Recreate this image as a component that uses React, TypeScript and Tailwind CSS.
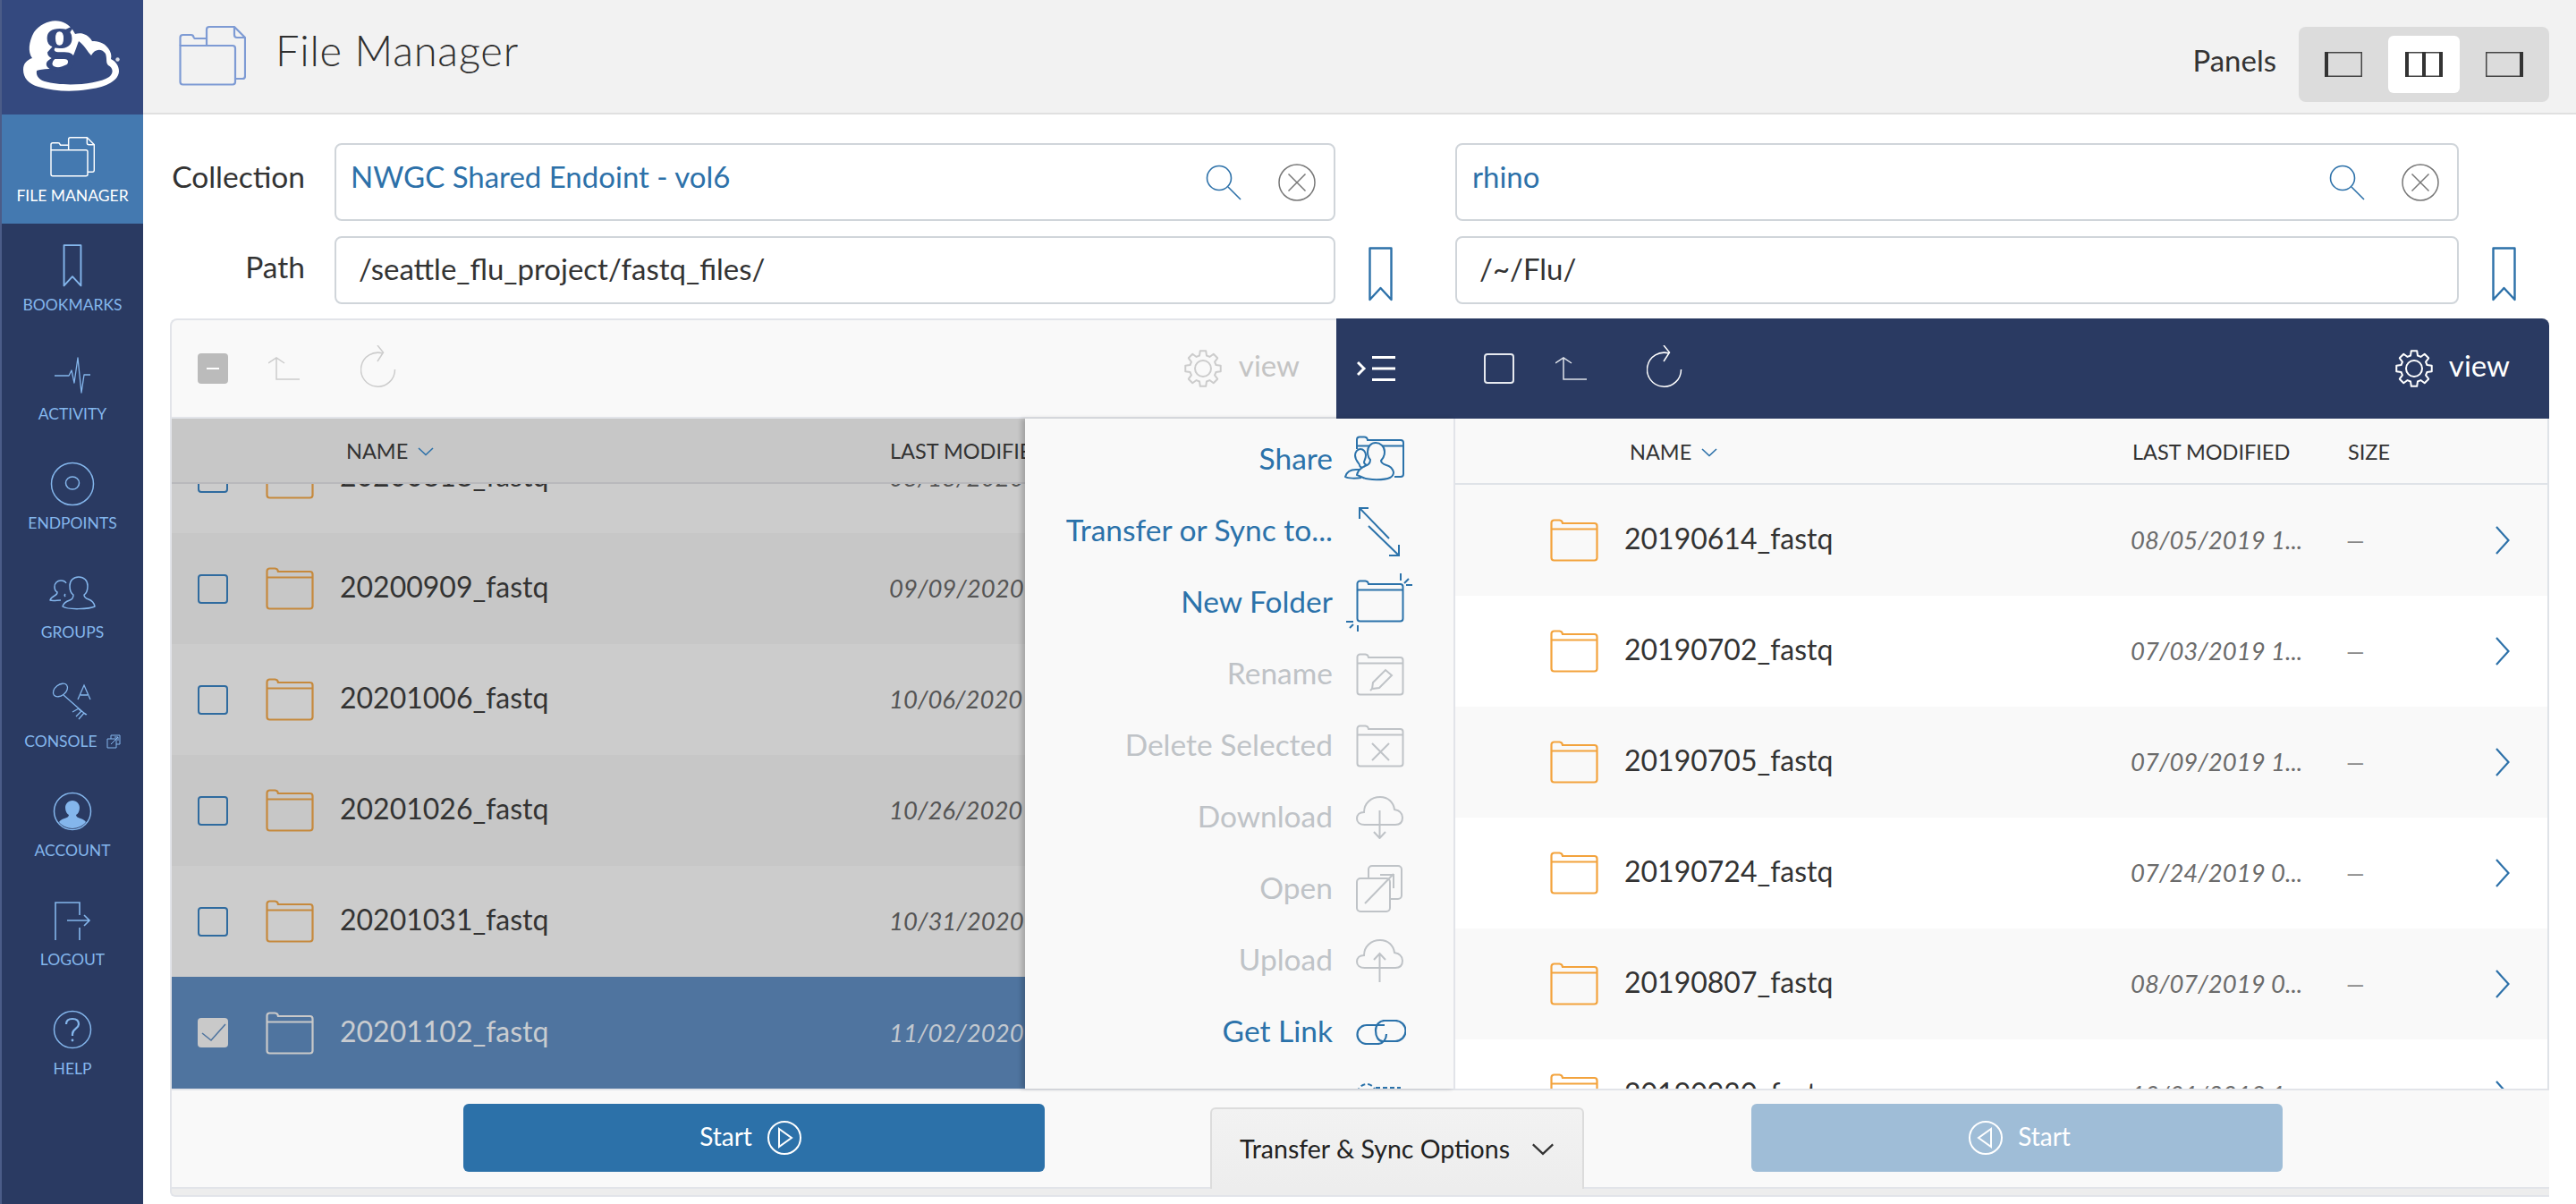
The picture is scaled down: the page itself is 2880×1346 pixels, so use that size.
import React from "react";

type P = { className?: string };

function gearPath() {
  const cx = 21, cy = 21, n = 8, ro = 20, ri = 15;
  const pts: string[] = [];
  for (let i = 0; i < n; i++) {
    const a = (i * 2 * Math.PI) / n - Math.PI / 2;
    const d1 = 0.27, d2 = 0.16;
    const list: [number, number][] = [[a - d1, ri], [a - d2, ro], [a + d2, ro], [a + d1, ri]];
    list.forEach(([t, r]) => pts.push(`${(cx + r * Math.cos(t)).toFixed(2)},${(cy + r * Math.sin(t)).toFixed(2)}`));
  }
  return pts.join(" ");
}

const Gear = ({ className }: P) => (
  <svg viewBox="0 0 42 42" className={className} fill="none" stroke="currentColor" strokeWidth="2" strokeLinejoin="round">
    <polygon points={gearPath()} />
    <circle cx="21" cy="21" r="9" />
  </svg>
);

const Folder = ({ className }: P) => (
  <svg viewBox="0 0 54 48" className={className} fill="none" stroke="currentColor" strokeWidth="2.2">
    <path d="M1.5 43.5V4.5a3 3 0 0 1 3-3h6a4 4 0 0 1 3.5 3.5H49.5a3 3 0 0 1 3 3V43.5a3 3 0 0 1-3 3H4.5a3 3 0 0 1-3-3z" />
    <path d="M1.5 11.5H52.5" />
  </svg>
);

const FileMgr = ({ className }: P) => (
  <svg viewBox="0 0 75 68" className={className} fill="none" stroke="currentColor" strokeWidth="2.2" strokeLinejoin="round">
    <path d="M1.5 23V14a3 3 0 0 1 3-3h9a3 3 0 0 1 3 2.5l1 1.5H31" />
    <path d="M1.5 23H60a3 3 0 0 1 3 3V63.5a3 3 0 0 1-3 3H4.5a3 3 0 0 1-3-3z" />
    <path d="M31 23V5a3 3 0 0 1 3-3H62L74 14V57a3 3 0 0 1-3 3H63" />
    <path d="M62 2V11a3 3 0 0 0 3 3H74" />
  </svg>
);

const Bookmark = ({ className }: P) => (
  <svg viewBox="0 0 27 61" className={className} fill="none" stroke="currentColor" strokeWidth="2.4" strokeLinejoin="round">
    <path d="M1.5 1.5H25.5V59L13.5 46 1.5 59z" />
  </svg>
);

const Activity = ({ className }: P) => (
  <svg viewBox="0 0 40 41" className={className} fill="none" stroke="currentColor" strokeWidth="1.3" strokeLinejoin="round">
    <path d="M0 21H16L19 15 22 29 26 1 30 40 33 20H40" />
  </svg>
);

const Endpoints = ({ className }: P) => (
  <svg viewBox="0 0 50 50" className={className} fill="none" stroke="currentColor" strokeWidth="1.5">
    <circle cx="25" cy="25" r="23.5" />
    <ellipse cx="25" cy="24" rx="7.5" ry="7" />
  </svg>
);

const Groups = ({ className }: P) => (
  <svg viewBox="0 0 52 38" className={className} fill="none" stroke="currentColor" strokeWidth="1.5" strokeLinejoin="round">
    <path d="M27 21c-3-2-4-6-4-10 0-6 4-10 10-10s10 4 10 10c0 4-1 8-4 10 0 3 2 4 5 5 3 1 6 3 7 8-6 3-30 4-36 0 1-4 5-6 8-7 3-1 4-3 4-6z" />
    <path d="M13 27c-4 0-9 1-12 0 1-3 3-4 5-5 2-1 3-2 3-4-2-1-3-4-3-6 0-4 3-7 7-7 3 0 5 1 6 3M18 20c-1 1-1 2 0 3" />
  </svg>
);

const Console = ({ className }: P) => (
  <svg viewBox="0 0 46 45" className={className} fill="none" stroke="currentColor" strokeWidth="1.3">
    <ellipse cx="9.5" cy="8.5" rx="9" ry="6" transform="rotate(-38 9.5 8.5)" />
    <path d="M13 14 38 36M30 29l-7 4M33 32l-6 6M36 34l-6 7M39 36l-9-6" />
    <path d="M29 19 36 3 43 19M32 14H40" />
  </svg>
);

const MiniOpen = ({ className }: P) => (
  <svg viewBox="0 0 16 16" className={className} fill="none" stroke="currentColor" strokeWidth="1">
    <path d="M5 5V1H15V11H11" />
    <path d="M1 5H11V15H1z" />
    <path d="M5 11 13 3M9 3H13V7" />
  </svg>
);

const Account = ({ className }: P) => (
  <svg viewBox="0 0 44 44" className={className}>
    <circle cx="22" cy="22" r="20.5" fill="none" stroke="currentColor" strokeWidth="1.5" />
    <path fill="currentColor" d="M22 10c5 0 8 4 8 8 0 4-2 7-4 8 0 2 2 3 5 4 3 1 5 2 6 4-3 4-9 7-15 7s-12-3-15-7c1-2 3-3 6-4 3-1 5-2 5-4-2-1-4-4-4-8 0-4 3-8 8-8z" />
  </svg>
);

const Logout = ({ className }: P) => (
  <svg viewBox="0 0 41 43" className={className} fill="none" stroke="currentColor" strokeWidth="1.6">
    <path d="M1 43V1H28V15M28 29V43M14 21H39M33 15l6 6-6 6" />
  </svg>
);

const Help = ({ className }: P) => (
  <svg viewBox="0 0 44 44" className={className} fill="none" stroke="currentColor" strokeWidth="1.5">
    <circle cx="22" cy="22" r="20.5" />
    <path strokeWidth="2.2" d="M15 16c0-4 3-6 7-6s7 2 7 6c0 5-7 5-7 11v2" />
    <circle cx="22" cy="34" r="1.4" fill="currentColor" stroke="none" />
  </svg>
);

const PanelIcon = ({ mode }: { mode: "l" | "b" | "r" }) => (
  <svg viewBox="0 0 42 28" className="w-[42px] h-[28px]">
    <rect x="0.75" y="0.75" width="40.5" height="26.5" fill="none" stroke="#444" strokeWidth="1.5" />
    {mode !== "r" && <rect x="0" y="0" width="4" height="28" fill="#333" />}
    {mode !== "l" && <rect x="38" y="0" width="4" height="28" fill="#333" />}
    {mode === "b" && <rect x="19" y="0" width="4" height="28" fill="#333" />}
  </svg>
);

const Search = () => (
  <svg viewBox="0 0 40 40" className="w-[40px] h-[40px] text-[#2d71a9]" fill="none" stroke="currentColor" strokeWidth="1.6">
    <circle cx="15" cy="15" r="13.5" />
    <path d="M25 25 39 39" />
  </svg>
);

const Clear = () => (
  <svg viewBox="0 0 42 42" className="w-[42px] h-[42px] text-[#777777]" fill="none" stroke="currentColor" strokeWidth="1.5">
    <circle cx="21" cy="21" r="20" />
    <path d="M11.5 11.5 30.5 30.5M30.5 11.5 11.5 30.5" />
  </svg>
);

const UpArrow = ({ className }: P) => (
  <svg viewBox="0 0 36 26" className={className} fill="none" stroke="currentColor" strokeWidth="1.5">
    <path d="M0 7 9 1 18 7M9 1V25H35" />
  </svg>
);

const Refresh = ({ className }: P) => (
  <svg viewBox="0 0 40 47" className={className} fill="none" stroke="currentColor" strokeWidth="1.5">
    <path d="M25 9A19 19 0 1 0 38.5 27" />
    <path d="M19 0 25.5 8 19 18" />
  </svg>
);

const ChevDown = ({ className }: P) => (
  <svg viewBox="0 0 18 10" className={className} fill="none" stroke="currentColor" strokeWidth="1.6">
    <path d="M1 1 9 8.5 17 1" />
  </svg>
);

const ChevRight = () => (
  <svg viewBox="0 0 16 32" className="w-[16px] h-[32px] shrink-0 text-[#2d71a9]" fill="none" stroke="currentColor" strokeWidth="2.2">
    <path d="M1 1 14.5 16 1 31" />
  </svg>
);

const FolderBase = () => (
  <>
    <path d="M1.5 43.5V4.5a3 3 0 0 1 3-3h6a4 4 0 0 1 3.5 3.5H49.5a3 3 0 0 1 3 3V43.5a3 3 0 0 1-3 3H4.5a3 3 0 0 1-3-3z" />
    <path d="M1.5 11.5H52.5" />
  </>
);

const ShareIcon = () => (
  <svg viewBox="0 0 67 55" className="w-[67px] h-[55px] shrink-0 -ml-[13px]" fill="none" stroke="currentColor" strokeWidth="2">
    <path d="M14 15V4.5a3 3 0 0 1 3-3h5a4 4 0 0 1 4 3.5H63a3 3 0 0 1 3 3V43a3 3 0 0 1-3 3H56" />
    <path d="M14 11.5H66" />
    <path fill="#f9f9f9" d="M24 37c-3 1-7 1-11 1S3 39 1 46c3 2 12 2 18 1" />
    <path fill="#f9f9f9" d="M12 22a6 7 0 1 1 12 0c0 4-2 6-2 8 0 2 3 3 6 5l-5 2c-4-1-6-2-6-4 0-2-5-5-5-11z" />
    <path fill="#f9f9f9" d="M29 27c-2-2-3-5-3-9 0-6 4-10 9-10s10 4 10 10c0 5-2 8-4 10 0 3 3 4 6 5 4 1 7 4 8 8 0 3-2 5-4 6-6 3-24 3-30 0l-7-3c1-5 5-8 9-10 4-1 6-3 6-7z" />
  </svg>
);

const TransferIcon = () => (
  <svg viewBox="0 0 46 56" className="w-[46px] h-[56px] shrink-0 ml-[3px]" fill="none" stroke="currentColor" strokeWidth="2">
    <path d="M1 2 34 36M1 14V2H11M11 22 45 55M45 43V55H34" />
  </svg>
);

const NewFolderIcon = () => (
  <svg viewBox="-12 -7 76 66" className="w-[76px] h-[66px] shrink-0 -ml-[12px]" fill="none" stroke="currentColor" strokeWidth="2">
    <FolderBase />
    <path d="M50-7V1M54 4l5-5M56 6H63M-11 47H-3M-7 54l4-4M2 51V58" />
  </svg>
);

const RenameIcon = () => (
  <svg viewBox="0 0 54 48" className="w-[54px] h-[48px] shrink-0" fill="none" stroke="currentColor" strokeWidth="2">
    <FolderBase />
    <path d="M19 33 33 19l7 6-14 14-8 1zM16 42l2-2" />
  </svg>
);

const DeleteIcon = () => (
  <svg viewBox="0 0 54 48" className="w-[54px] h-[48px] shrink-0" fill="none" stroke="currentColor" strokeWidth="2">
    <FolderBase />
    <path d="M18 21 37 40M37 21 18 40" />
  </svg>
);

const cloud = "M10 32C4 32 1 29 1 25C1 21 4 18 9 18C9 8 17 1 27 1C36 1 42 7 43 15C48 16 52 19 52 24C52 29 49 32 44 32Z";

const DownloadIcon = () => (
  <svg viewBox="0 0 54 48" className="w-[54px] h-[48px] shrink-0" fill="none" stroke="currentColor" strokeWidth="2">
    <path d={cloud} />
    <path d="M26.5 16V47M20 40 26.5 47 33 40" />
  </svg>
);

const UploadIcon = () => (
  <svg viewBox="0 0 54 48" className="w-[54px] h-[48px] shrink-0" fill="none" stroke="currentColor" strokeWidth="2">
    <path d={cloud} />
    <path d="M26.5 48V16M20 23 26.5 16 33 23" />
  </svg>
);

const OpenIcon = () => (
  <svg viewBox="0 0 54 54" className="w-[54px] h-[54px] shrink-0" fill="none" stroke="currentColor" strokeWidth="2">
    <path d="M14 16V5a4 4 0 0 1 4-4H47a4 4 0 0 1 4 4V34a4 4 0 0 1-4 4H38" />
    <path d="M1 19a4 4 0 0 1 4-4H34a4 4 0 0 1 4 4V48a4 4 0 0 1-4 4H5a4 4 0 0 1-4-4z" />
    <path d="M10 43 42 10M27 11H42V26" />
  </svg>
);

const LinkIcon = () => (
  <svg viewBox="0 0 58 28" className="w-[58px] h-[28px] shrink-0 -ml-[2px]" fill="none" stroke="currentColor" strokeWidth="2.2">
    <path d="M34 6H14a10.500 10.500 0 0 0 0 21H26C33 27 36 21 36 16" />
    <path d="M24 12C24 6 28 1 34 1H46a11 11 0 0 1 0 23H32C27 24 24 19 24 12z" />
  </svg>
);

const HiddenIcon = () => (
  <svg viewBox="0 0 54 48" className="w-[54px] h-[48px] shrink-0" fill="none" stroke="currentColor" strokeWidth="2" strokeDasharray="5 3">
    <circle cx="12" cy="12" r="10" />
    <path d="M22 6H50" />
  </svg>
);

const Logo = () => (
  <svg viewBox="0 0 158 128" className="w-[158px] h-[128px] block">
    <path fill="#fff" d="M24 78C24 71 28 67 34 65C29 58 30 47 36 36C43 26 56 21 66 24C74 26 79 32 82 38C89 36 96 38 101 46C107 46 114 47 119 54C122 58 123 62 122 66C128 69 131 74 131 80C130 92 113 98 96 100C78 103 58 102 41 97C30 94 24 87 24 78Z" />
    <path fill="#34497f" d="M39 79C45 76 58 79 73 72C80 66 82 56 86 46C92 50 96 58 100 62C104 54 112 54 116 60C118 66 116 70 119 73C125 76 125 82 120 86C106 95 68 97 48 91C42 89 38 85 39 79Z" />
    <text x="65" y="65" textAnchor="middle" fontFamily="'Liberation Serif', serif" fontWeight="700" fontSize="68" fill="#34497f">g</text>
    <circle cx="129.500" cy="66.500" r="2.2" fill="#fff" opacity="0.8" />
  </svg>
);

const nav = [
  { label: "BOOKMARKS", icon: <Bookmark className="w-[22px] h-[48px]" /> },
  { label: "ACTIVITY", icon: <Activity className="w-[40px] h-[41px]" /> },
  { label: "ENDPOINTS", icon: <Endpoints className="w-[50px] h-[50px]" /> },
  { label: "GROUPS", icon: <Groups className="w-[52px] h-[38px]" /> },
  { label: "CONSOLE", icon: <Console className="w-[46px] h-[45px]" />, ext: true },
  { label: "ACCOUNT", icon: <Account className="w-[44px] h-[44px]" /> },
  { label: "LOGOUT", icon: <Logout className="w-[41px] h-[43px]" /> },
  { label: "HELP", icon: <Help className="w-[44px] h-[44px]" /> },
];

const NavItem = ({ label, icon, ext, active }: { label: string; icon: React.ReactNode; ext?: boolean; active?: boolean }) => (
  <div className={`h-[122px] flex flex-col items-center pt-[16px] ${active ? "bg-[#4479b0] text-white" : "text-[#84b6ec]"}`}>
    <div className="h-[62px] flex items-center justify-center">{icon}</div>
    <div className="h-[26px] flex items-center gap-[10px] text-[17.500px] leading-none">
      <span>{label}</span>
      {ext && <MiniOpen className="w-[16px] h-[16px]" />}
    </div>
  </div>
);

const Sidebar = () => (
  <aside className="w-[160px] h-full shrink-0 bg-[#2a3a62] border-l-2 border-[#4b5c88]">
    <div className="h-[128px] bg-[#34497f]">
      <Logo />
    </div>
    <NavItem label="FILE MANAGER" active icon={<FileMgr className="w-[50px] h-[46px]" />} />
    {nav.map((n) => (
      <NavItem key={n.label} label={n.label} icon={n.icon} ext={n.ext} />
    ))}
  </aside>
);

const Header = () => (
  <header className="h-[128px] shrink-0 bg-[#f2f2f2] border-b-2 border-[#e0e0e0] flex items-center pl-[40px] pr-[30px]">
    <FileMgr className="w-[75px] h-[68px] text-[#7e9bd4] mb-[2px]" />
    <h1 className="ml-[33px] text-[47px] leading-none font-light text-[#2f2f2f] mb-[14px] tracking-[0.8px]">File Manager</h1>
    <div className="ml-auto self-start mt-[30px] flex items-center">
      <span className="text-[33px] text-[#333] mr-[25px] mb-[8px]">Panels</span>
      <div className="w-[280px] h-[84px] rounded-[8px] bg-[#dcdcdc] flex items-center pl-[10px] pr-[10px]">
        <div className="w-[80px] h-[64px] flex items-center justify-center"><PanelIcon mode="l" /></div>
        <div className="ml-[10px] w-[80px] h-[64px] rounded-[6px] bg-white flex items-center justify-center"><PanelIcon mode="b" /></div>
        <div className="ml-[10px] w-[80px] h-[64px] flex items-center justify-center"><PanelIcon mode="r" /></div>
      </div>
    </div>
  </header>
);

const Inputs = () => (
  <div className="pt-[32px] shrink-0">
    <div className="flex h-[87px]">
      <div className="w-[151px] shrink-0 text-right text-[33.500px] leading-[40px] text-[#333] pt-[17px] whitespace-nowrap">Collection</div>
      <div className="ml-[33px] w-[1119px] shrink-0 rounded-[8px] border-2 border-[#d0d5da] flex items-center pl-[16px] pr-[20px]">
        <span className="text-[33px] text-[#2d71a9] mb-[12px]">NWGC Shared Endoint - vol6</span>
        <div className="ml-auto flex items-center gap-[41px]"><Search /><Clear /></div>
      </div>
      <div className="w-[134px] shrink-0" />
      <div className="w-[1122px] shrink-0 rounded-[8px] border-2 border-[#d0d5da] flex items-center pl-[17px] pr-[20px]">
        <span className="text-[33px] text-[#2d71a9] mb-[12px]">rhino</span>
        <div className="ml-auto flex items-center gap-[41px]"><Search /><Clear /></div>
      </div>
    </div>
    <div className="flex h-[76px] mt-[17px]">
      <div className="w-[151px] shrink-0 text-right text-[33.500px] leading-[40px] text-[#333] pt-[14px]">Path</div>
      <div className="ml-[33px] w-[1119px] shrink-0 rounded-[8px] border-2 border-[#d0d5da] flex items-center pl-[25px]">
        <span className="text-[33px] text-[#333] mb-[3px]">/seattle_flu_project/fastq_files/</span>
      </div>
      <div className="w-[134px] shrink-0 flex justify-start pl-[37px] pt-[12px]">
        <Bookmark className="w-[27px] h-[61px] text-[#2d71a9]" />
      </div>
      <div className="w-[1122px] shrink-0 rounded-[8px] border-2 border-[#d0d5da] flex items-center pl-[25px]">
        <span className="text-[33px] text-[#333] mb-[3px]">/~/Flu/</span>
      </div>
      <div className="pl-[37px] pt-[12px]">
        <Bookmark className="w-[27px] h-[61px] text-[#2d71a9]" />
      </div>
    </div>
  </div>
);

const Toolbar = () => (
  <div className="mt-[16px] h-[112px] flex shrink-0">
    <div className="w-[1304px] shrink-0 h-full rounded-tl-[8px] bg-[#f9f9f9] border-t-2 border-l-2 border-b-2 border-[#e2e4e9] flex items-center pl-[29px] pr-[41px]">
      <div className="w-[34px] h-[34px] rounded-[4px] bg-[#bbbbbb] flex items-center justify-center">
        <div className="w-[14px] h-[2px] bg-white" />
      </div>
      <UpArrow className="ml-[45px] w-[36px] h-[26px] text-[#cccccc]" />
      <Refresh className="ml-[67px] w-[40px] h-[47px] text-[#cccccc] mb-[6px]" />
      <Gear className="ml-auto w-[42px] h-[42px] text-[#cccccc]" />
      <span className="ml-[19px] text-[33px] text-[#c4c4c4] mb-[6px]">view</span>
    </div>
    <div className="flex-1 h-full rounded-tr-[8px] bg-[#2a3a62] flex items-center pl-[23px] pr-[44px] text-white">
      <svg viewBox="0 0 43 28" className="w-[43px] h-[28px]" fill="none" stroke="currentColor" strokeWidth="3">
        <path d="M1 7 8 14 1 21M17 1.500H43M17 14H43M17 26.500H43" />
      </svg>
      <div className="ml-[99px] w-[34px] h-[34px] rounded-[4px] border-2 border-[#e6e9ef]" />
      <UpArrow className="ml-[46px] w-[36px] h-[26px] text-[#dfe3ea]" />
      <Refresh className="ml-[66px] w-[40px] h-[47px] text-white mb-[6px]" />
      <Gear className="ml-auto w-[42px] h-[42px] text-white" />
      <span className="ml-[18px] text-[33px] mb-[6px]">view</span>
    </div>
  </div>
);

const leftRows = [
  { name: "20200818_fastq", date: "08/18/2020 09:14 am", bg: "bg-[#cccccc]" },
  { name: "20200909_fastq", date: "09/09/2020 01:23 pm", bg: "bg-[#c7c7c7]" },
  { name: "20201006_fastq", date: "10/06/2020 11:02 am", bg: "bg-[#cccccc]" },
  { name: "20201026_fastq", date: "10/26/2020 02:47 pm", bg: "bg-[#c7c7c7]" },
  { name: "20201031_fastq", date: "10/31/2020 03:36 pm", bg: "bg-[#cccccc]" },
];

const LeftTable = () => (
  <div className="w-[956px] h-full shrink-0 border-l-2 border-[#e2e4e9] flex flex-col overflow-hidden">
    <div className="h-[73px] shrink-0 bg-[#c7c7c7] border-b-2 border-[#b9b9bc] flex items-center pl-[195px] pt-[3px] text-[23.500px] text-[#333] whitespace-nowrap">
      <div className="w-[608px] shrink-0 flex items-center gap-[11px]">NAME<ChevDown className="w-[18px] h-[10px] text-[#2d71a9]" /></div>
      <span>LAST MODIFIED</span>
    </div>
    <div className="flex-1 overflow-hidden">
      <div className="-mt-[69px]">
        {leftRows.map((r) => (
          <div key={r.name} className={`h-[124px] flex items-center pl-[29px] whitespace-nowrap ${r.bg}`}>
            <div className="w-[34px] h-[33px] shrink-0 rounded-[4px] border-2 border-[#2f6b9f]" />
            <Folder className="ml-[42px] w-[54px] h-[48px] shrink-0 text-[#c6893c]" />
            <div className="ml-[29px] w-[614px] shrink-0 text-[32px] text-[#333] mb-[4px]">{r.name}</div>
            <div className="text-[27.500px] italic text-[#555555] shrink-0">{r.date}</div>
          </div>
        ))}
        <div className="h-[125px] flex items-center pl-[29px] whitespace-nowrap bg-[#4f749f]">
          <div className="w-[34px] h-[33px] shrink-0 rounded-[4px] bg-[#c9c9c9] flex items-center justify-center">
            <svg viewBox="0 0 34 33" className="w-[34px] h-[33px]" fill="none" stroke="#4f749f" strokeWidth="1.6">
              <path d="M5 17 15 25 31 7" />
            </svg>
          </div>
          <Folder className="ml-[42px] w-[54px] h-[48px] shrink-0 text-[#c9c9c9]" />
          <div className="ml-[29px] w-[614px] shrink-0 text-[32px] text-[#c9ccd0] mb-[4px]">20201102_fastq</div>
          <div className="text-[27.500px] italic text-[#c2c8cf] shrink-0">11/02/2020 04:51 pm</div>
        </div>
      </div>
    </div>
  </div>
);

const MenuItem = ({ label, icon, on }: { label: string; icon: React.ReactNode; on?: boolean }) => (
  <div className={`h-[80px] shrink-0 flex items-center justify-end pr-[55px] ${on ? "text-[#2b72aa]" : "text-[#bfc3c7]"}`}>
    {label && <span className="text-[33.500px] mb-[4px] whitespace-nowrap">{label}</span>}
    <div className="ml-[26px] w-[54px] shrink-0 flex items-center justify-start">{icon}</div>
  </div>
);

const Menu = () => (
  <div className="w-[481px] h-full shrink-0 relative bg-[#f9f9f9] border-r-2 border-[#e2e4e9] pt-[6px] overflow-hidden shadow-[-4px_0_5px_rgba(0,0,0,0.18)]">
    <MenuItem on label="Share" icon={<ShareIcon />} />
    <MenuItem on label="Transfer or Sync to..." icon={<TransferIcon />} />
    <MenuItem on label="New Folder" icon={<NewFolderIcon />} />
    <MenuItem label="Rename" icon={<RenameIcon />} />
    <MenuItem label="Delete Selected" icon={<DeleteIcon />} />
    <MenuItem label="Download" icon={<DownloadIcon />} />
    <MenuItem label="Open" icon={<OpenIcon />} />
    <MenuItem label="Upload" icon={<UploadIcon />} />
    <MenuItem on label="Get Link" icon={<LinkIcon />} />
    <MenuItem on label="" icon={<HiddenIcon />} />
  </div>
);

const rightRows = [
  { name: "20190614_fastq", date: "08/05/2019 1...", bg: "bg-[#f9f9f9]" },
  { name: "20190702_fastq", date: "07/03/2019 1...", bg: "bg-white" },
  { name: "20190705_fastq", date: "07/09/2019 1...", bg: "bg-[#f9f9f9]" },
  { name: "20190724_fastq", date: "07/24/2019 0...", bg: "bg-white" },
  { name: "20190807_fastq", date: "08/07/2019 0...", bg: "bg-[#f9f9f9]" },
  { name: "20190930_fastq", date: "10/01/2019 1...", bg: "bg-white" },
];

const RightTable = () => (
  <div className="flex-1 h-full flex flex-col overflow-hidden border-r-2 border-[#dfe3e8]">
    <div className="h-[74px] shrink-0 bg-[#f9f9f9] border-b-2 border-[#dfe3e8] flex items-center pl-[195px] pt-[3px] text-[23.500px] text-[#333] whitespace-nowrap">
      <div className="w-[562px] shrink-0 flex items-center gap-[11px]">NAME<ChevDown className="w-[18px] h-[10px] text-[#2d71a9]" /></div>
      <span className="w-[241px] shrink-0">LAST MODIFIED</span>
      <span>SIZE</span>
    </div>
    <div className="flex-1 overflow-hidden">
      {rightRows.map((r) => (
        <div key={r.name} className={`h-[124px] flex items-center pl-[106px] whitespace-nowrap ${r.bg}`}>
          <Folder className="w-[54px] h-[48px] shrink-0 text-[#f3a33d]" />
          <div className="ml-[29px] w-[566px] shrink-0 text-[32px] text-[#333] mb-[4px]">{r.name}</div>
          <div className="w-[241px] shrink-0 text-[27.500px] italic text-[#6b6b6b]">{r.date}</div>
          <div className="w-[167px] shrink-0 text-[26px] text-[#888888]">—</div>
          <ChevRight />
        </div>
      ))}
    </div>
  </div>
);

const PlayIcon = ({ dir }: { dir: "r" | "l" }) => (
  <svg viewBox="0 0 38 38" className="w-[38px] h-[38px]" fill="none" stroke="currentColor" strokeWidth="2">
    <circle cx="19" cy="19" r="18" />
    <path d={dir === "r" ? "M13 9 27 19 13 29z" : "M25 9 11 19 25 29z"} />
  </svg>
);

const BottomBar = () => (
  <div className="shrink-0">
    <div className="h-[112px] bg-[#f9f9f9] border-t-2 border-b-2 border-l-2 border-[#e2e4e9] flex items-start pl-[326px]">
      <div className="mt-[15px] w-[650px] shrink-0 h-[76px] rounded-[6px] bg-[#2c71a9] text-white flex items-center justify-center gap-[17px] pr-[8px]">
        <span className="text-[28px] mb-[4px]">Start</span>
        <PlayIcon dir="r" />
      </div>
      <div className="ml-[185px] mt-[19px] w-[418px] shrink-0 h-[91px] rounded-t-[6px] bg-gradient-to-b from-[#f2f2f2] to-[#ededed] border-t-2 border-l-2 border-r-2 border-[#dcdcdc] flex items-center pl-[31px] text-[28.500px] text-[#222] whitespace-nowrap">
        <span>Transfer &amp; Sync Options</span>
        <ChevDown className="ml-[23px] w-[28px] h-[14px] text-[#333]" />
      </div>
      <div className="ml-[187px] mt-[15px] w-[594px] shrink-0 h-[76px] rounded-[6px] bg-[#9fbdd7] text-white flex items-center justify-center gap-[17px] pl-[6px]">
        <PlayIcon dir="l" />
        <span className="text-[28px] mb-[4px]">Start</span>
      </div>
    </div>
    <div className="h-[9px] bg-[#ededed] border-b-2 border-l-2 border-[#e2e4e9] rounded-bl-[6px]" />
  </div>
);

export default function App() {
  return (
    <div className="flex w-[2880px] h-[1346px] overflow-hidden bg-white font-['Lato',sans-serif]">
      <Sidebar />
      <main className="flex-1 flex flex-col h-full">
        <Header />
        <div className="flex-1 flex flex-col pl-[30px] pr-[30px]">
          <Inputs />
          <Toolbar />
          <div className="h-[749px] flex shrink-0">
            <LeftTable />
            <Menu />
            <RightTable />
          </div>
          <BottomBar />
        </div>
      </main>
    </div>
  );
}
